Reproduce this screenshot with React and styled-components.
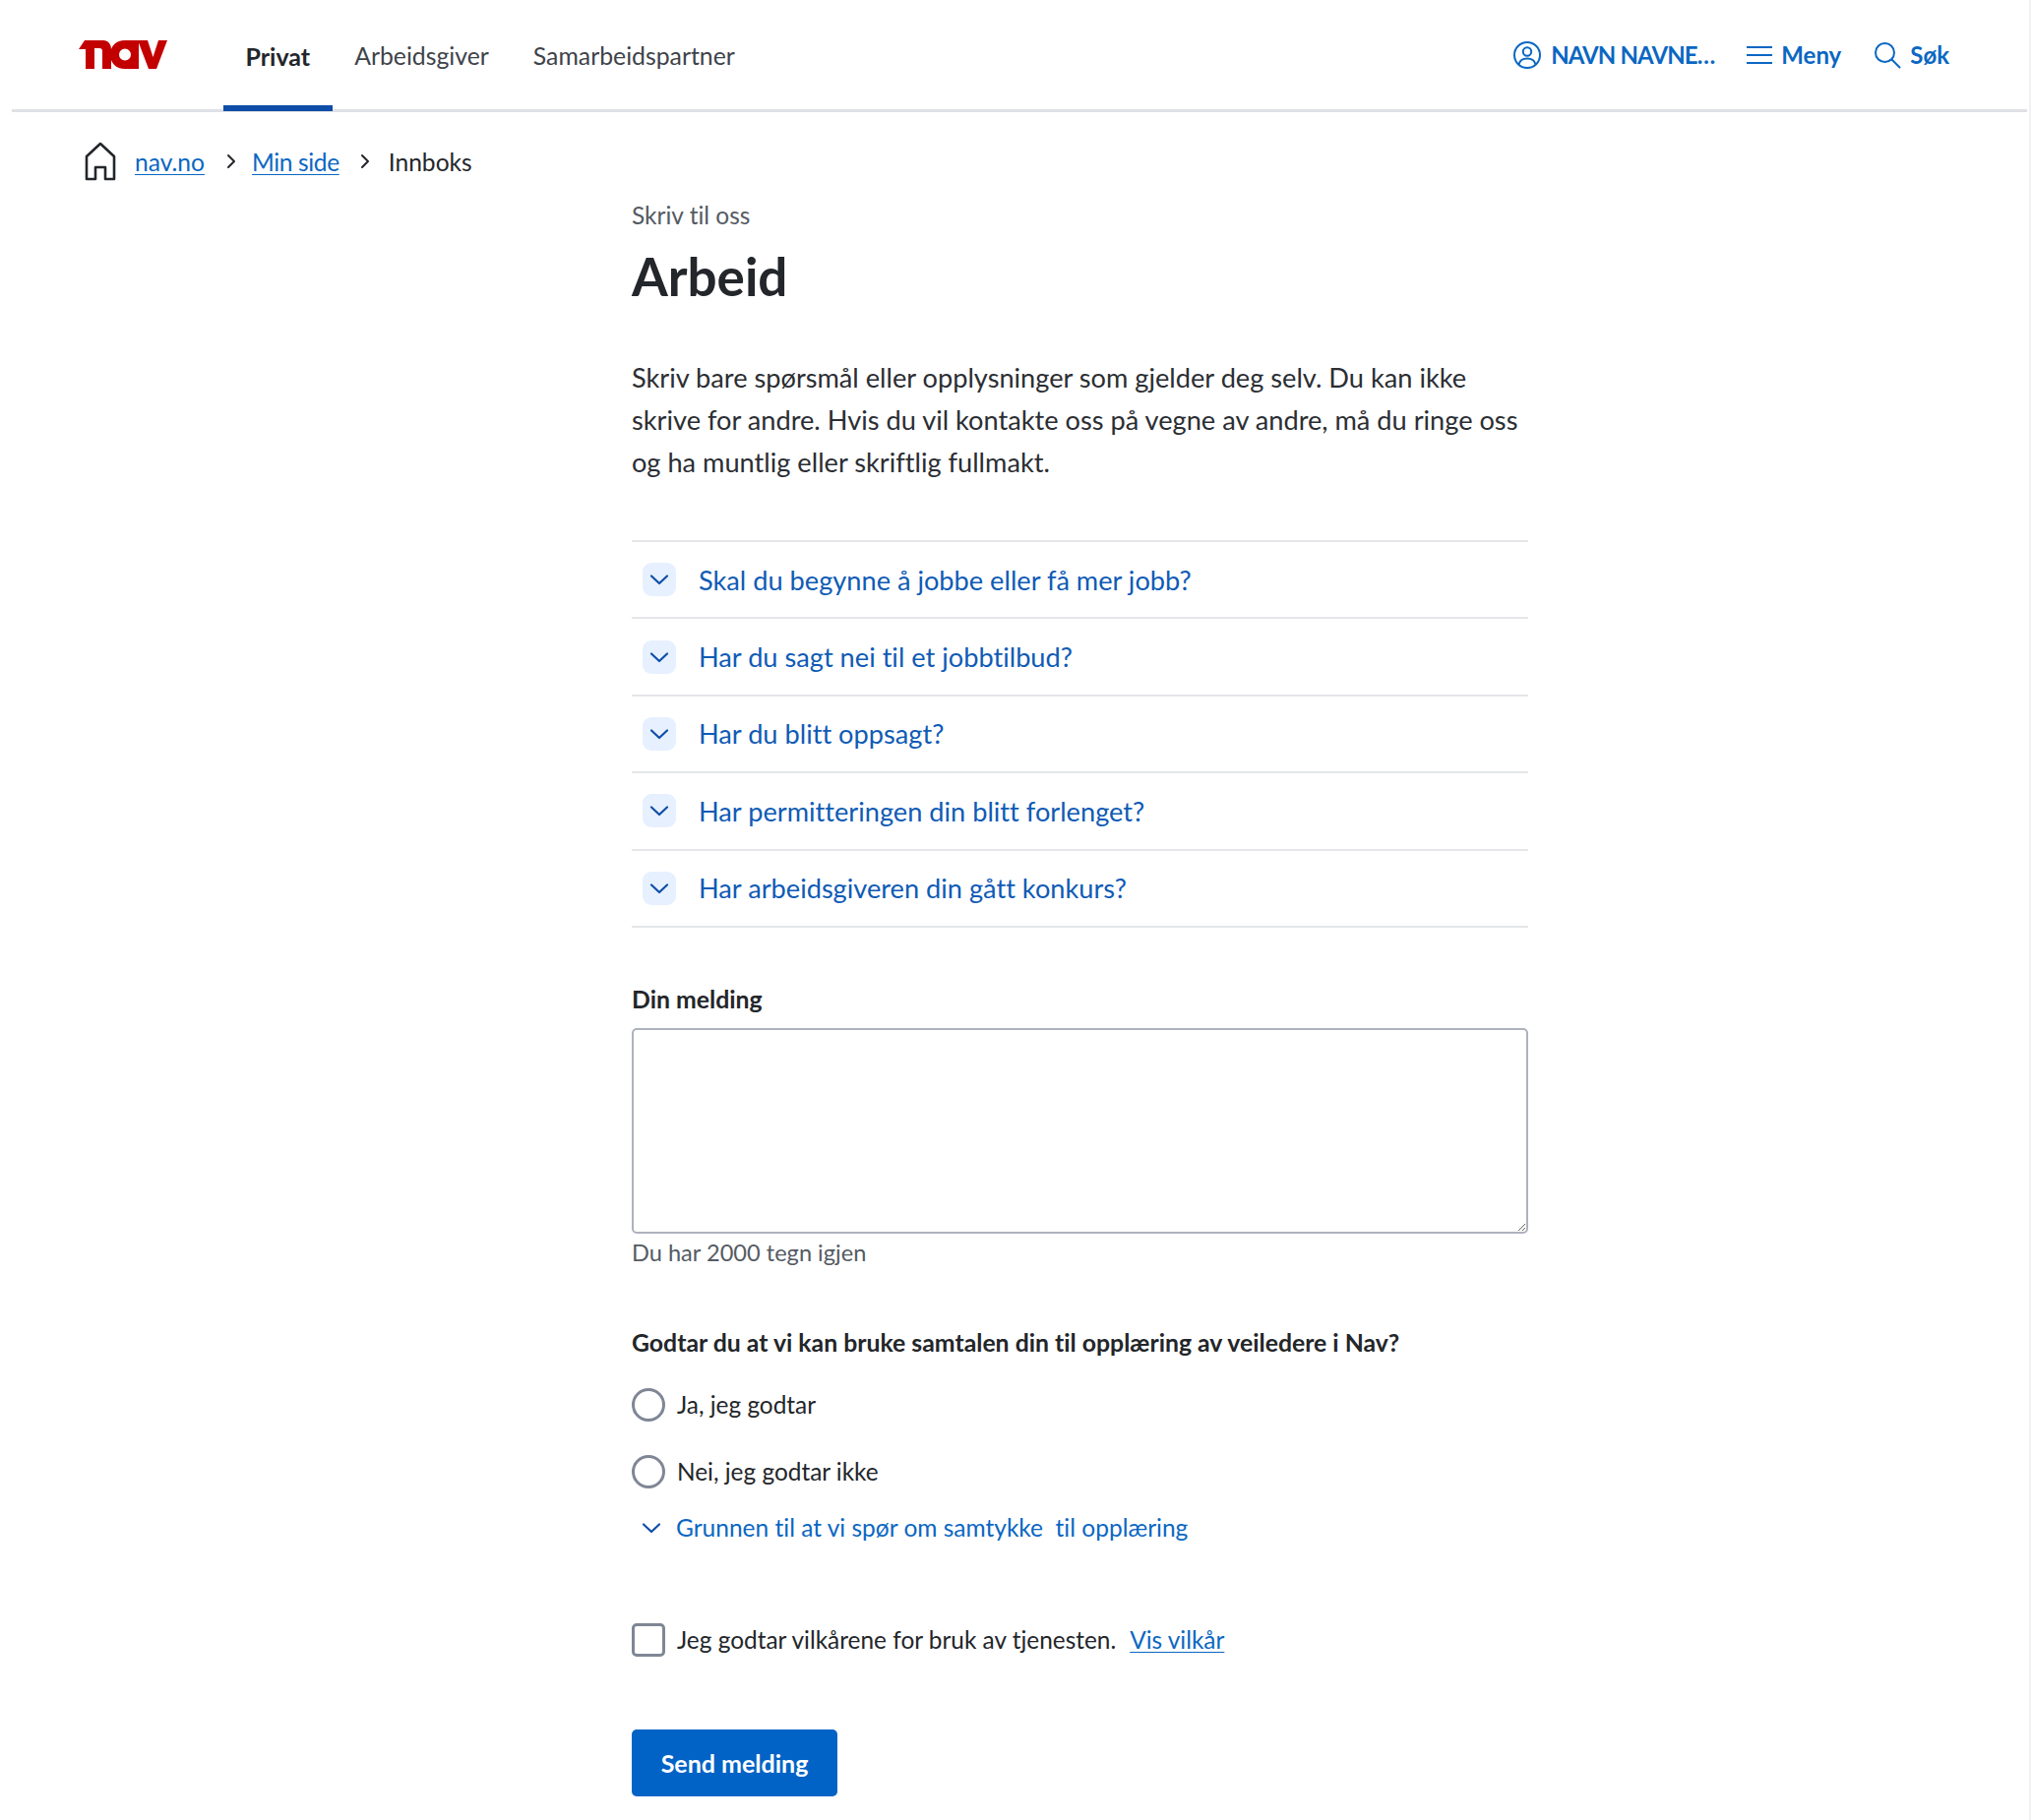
import styled, { createGlobalStyle } from 'styled-components';

const GlobalStyle = createGlobalStyle`
  * { box-sizing: border-box; }
  html, body { margin: 0; padding: 0; background: #fff; }
  body {
    font-family: "Lato", "Noto Sans", sans-serif;
    font-variant-ligatures: none;
    color: #23262a;
    -webkit-font-smoothing: antialiased;
  }
`;

const Page = styled.div`
  width: 2064px;
  min-height: 1850px;
  background: #fff;
  border-right: 2px solid #f1f2f3;
`;

const Header = styled.header`
  margin: 0 2px 0 12px;
  height: 114px;
  padding: 0 79px 0 68px;
  border-bottom: 3px solid #dfe1e5;
  display: flex;
  align-items: stretch;
  justify-content: space-between;
`;

const HeaderLeft = styled.div`
  display: flex;
  align-items: stretch;
`;

const Logo = styled.svg`
  width: 90px;
  height: 29px;
  align-self: center;
  margin-right: 57px;
`;

const Tab = styled.a`
  display: flex;
  align-items: center;
  padding: 6px 22.5px 0;
  font-size: ${p => (p.$active ? 25 : 24.8)}px;
  color: ${p => (p.$active ? '#23262a' : '#3e434a')};
  font-weight: ${p => (p.$active ? 700 : 400)};
  margin-bottom: -2px;
  border-bottom: 6px solid ${p => (p.$active ? '#0f4ea8' : 'transparent')};
`;

const HeaderRight = styled.div`
  display: flex;
  align-items: center;
  gap: 33px;
`;

const HeaderAction = styled.a`
  display: flex;
  align-items: center;
  gap: 9px;
  font-size: 24px;
  font-weight: 700;
  color: #0b67c2;
  letter-spacing: ${p => (p.$tight ? '-0.9px' : '0')};
`;

const Breadcrumbs = styled.nav`
  display: flex;
  align-items: center;
  height: 68px;
  margin-top: 16px;
  padding-left: 85px;
  font-size: 24.6px;
`;

const HomeIcon = styled.svg`
  width: 34px;
  height: 40px;
  margin-right: 18px;
`;

const CrumbLink = styled.a`
  color: #0b67c2;
  text-decoration: underline;
  text-underline-offset: 3px;
  text-decoration-thickness: 1px;
  letter-spacing: ${p => (p.$tight ? '-0.4px' : '0')};
`;

const CrumbSeparator = styled.svg`
  width: 14px;
  height: 16px;
  margin: 0 14.5px 0 19.5px;
`;

const CurrentCrumb = styled.span`
  margin-left: 2px;
`;

const Main = styled.main`
  width: 911px;
  margin: 4px 0 0 642px;
`;

const Eyebrow = styled.p`
  margin: 0;
  font-size: 24.5px;
  line-height: 34px;
  color: #555b63;
`;

const Title = styled.h1`
  margin: 10px 0 0;
  font-size: 53px;
  line-height: 70px;
  font-weight: 700;
  color: #23262a;
`;

const Intro = styled.p`
  margin: 46px 0 0;
  font-size: 27.2px;
  line-height: 43px;
  color: #2b2e33;
`;

const Accordion = styled.div`
  margin-top: 58px;
  border-top: 2px solid #e4e6e9;
`;

const AccordionRow = styled.div`
  height: 78.4px;
  display: flex;
  align-items: center;
  gap: 23px;
  padding-left: 11px;
  border-bottom: 2px solid #e4e6e9;
  color: #0f5bb5;
  font-size: 27.2px;
`;

const ChevronBox = styled.span`
  width: 34px;
  height: 34px;
  border-radius: 9px;
  background: #e6f0ff;
  display: flex;
  align-items: center;
  justify-content: center;
`;

const FieldLabel = styled.label`
  display: block;
  margin-top: 57px;
  font-size: 24.8px;
  line-height: 32px;
  font-weight: 700;
`;

const TextArea = styled.textarea`
  display: block;
  width: 100%;
  height: 209px;
  margin-top: 13px;
  border: 2px solid #adb2bd;
  border-radius: 5px;
  background: #fff;
  outline: none;
`;

const Helper = styled.p`
  margin: 3px 0 0;
  font-size: 23.6px;
  line-height: 32px;
  color: #555b63;
`;

const Question = styled.p`
  margin: 60px 0 0;
  font-size: 24.8px;
  line-height: 32px;
  font-weight: 700;
`;

const OptionRow = styled.label`
  display: flex;
  align-items: center;
  gap: 12px;
  height: 34px;
  margin-top: ${p => p.$top}px;
  font-size: 24.4px;
`;

const Radio = styled.span`
  width: 34px;
  height: 34px;
  border-radius: 50%;
  border: 3px solid #7f8796;
  background: #fff;
`;

const Checkbox = styled.span`
  width: 34px;
  height: 34px;
  border-radius: 5px;
  border: 3px solid #7f8796;
  background: #fff;
`;

const Disclosure = styled.a`
  display: flex;
  align-items: center;
  gap: 13px;
  margin-top: 23px;
  height: 34px;
  padding-left: 8px;
  font-size: 24.5px;
  color: #0b67c2;
`;

const TermsLink = styled(CrumbLink)`
  margin-left: 2px;
`;

const SendButton = styled.button`
  display: block;
  width: 209px;
  height: 68px;
  margin-top: 74px;
  border: 0;
  border-radius: 5px;
  background: #0263c6;
  color: #fff;
  font-family: inherit;
  font-size: 25px;
  font-weight: 700;
`;

const ChevronDown = () => (
  <svg width="24" height="24" viewBox="0 0 24 24" fill="none" stroke="#0f4ea8" strokeWidth="2.2" strokeLinecap="round" strokeLinejoin="round">
    <path d="M4 8.500 12 16 20 8.500" />
  </svg>
);

const CrumbChevron = () => (
  <CrumbSeparator viewBox="0 0 14 16" fill="none" stroke="#23262a" strokeWidth="2" strokeLinecap="round" strokeLinejoin="round">
    <path d="M4 2 10 8 4 14" />
  </CrumbSeparator>
);

const questions = [
  'Skal du begynne å jobbe eller få mer jobb?',
  'Har du sagt nei til et jobbtilbud?',
  'Har du blitt oppsagt?',
  'Har permitteringen din blitt forlenget?',
  'Har arbeidsgiveren din gått konkurs?',
];

const App = () => (
  <Page>
    <GlobalStyle />
    <Header>
      <HeaderLeft>
        <Logo viewBox="0 0 90 29" aria-label="nav">
          <g fill="#c30000">
            <path d="M0 9 6 0H25C30 0 33 4 33 9V29H24V11C24 9 23 8 21 8H16V29H7V9Z" />
            <path fillRule="evenodd" d="M47 0H61V29H47C38 29 32 23 32 14.500C32 6 38 0 47 0ZM47 8.500A6 6 0 1 0 47 20.500 6 6 0 1 0 47 8.500Z" />
            <path d="M60 0H70L75.500 17 81 0H90L79 29H71Z" />
          </g>
        </Logo>
        <Tab $active>Privat</Tab>
        <Tab>Arbeidsgiver</Tab>
        <Tab>Samarbeidspartner</Tab>
      </HeaderLeft>
      <HeaderRight>
        <HeaderAction $tight>
          <svg width="30" height="30" viewBox="0 0 30 30" fill="none" stroke="#0b67c2" strokeWidth="2">
            <circle cx="15" cy="15" r="13" />
            <circle cx="15" cy="11.500" r="4.200" />
            <path d="M6.500 24.500C7.500 20 10.500 18.500 15 18.500S22.500 20 23.500 24.500" />
          </svg>
          NAVN NAVNE…
        </HeaderAction>
        <HeaderAction>
          <svg width="26" height="24" viewBox="0 0 26 24" fill="none" stroke="#0b67c2" strokeWidth="2">
            <path d="M0 4H26M0 12H26M0 20H26" />
          </svg>
          Meny
        </HeaderAction>
        <HeaderAction>
          <svg width="28" height="28" viewBox="0 0 28 28" fill="none" stroke="#0b67c2" strokeWidth="2" strokeLinecap="round">
            <circle cx="11.500" cy="11.500" r="9.500" />
            <path d="M18.500 18.500 26.500 26.500" />
          </svg>
          Søk
        </HeaderAction>
      </HeaderRight>
    </Header>
    <Breadcrumbs>
      <HomeIcon viewBox="0 0 34 40" fill="none" stroke="#23262a" strokeWidth="2.600" strokeLinejoin="round">
        <path d="M3 15 17 2 31 15V38H22V26H12V38H3Z" />
      </HomeIcon>
      <CrumbLink>nav.no</CrumbLink>
      <CrumbChevron />
      <CrumbLink $tight>Min side</CrumbLink>
      <CrumbChevron />
      <CurrentCrumb>Innboks</CurrentCrumb>
    </Breadcrumbs>
    <Main>
      <Eyebrow>Skriv til oss</Eyebrow>
      <Title>Arbeid</Title>
      <Intro>
        Skriv bare spørsmål eller opplysninger som gjelder deg selv. Du kan ikke skrive for andre. Hvis du vil kontakte oss på vegne av andre, må du ringe oss og ha muntlig eller skriftlig fullmakt.
      </Intro>
      <Accordion>
        {questions.map(q => (
          <AccordionRow key={q}>
            <ChevronBox><ChevronDown /></ChevronBox>
            {q}
          </AccordionRow>
        ))}
      </Accordion>
      <FieldLabel>Din melding</FieldLabel>
      <TextArea />
      <Helper>Du har 2000 tegn igjen</Helper>
      <Question>Godtar du at vi kan bruke samtalen din til opplæring av veiledere i Nav?</Question>
      <OptionRow $top={30}><Radio />Ja, jeg godtar</OptionRow>
      <OptionRow $top={34}><Radio />Nei, jeg godtar ikke</OptionRow>
      <Disclosure><ChevronDown />Grunnen til at vi spør om samtykke&nbsp; til opplæring</Disclosure>
      <OptionRow $top={80}>
        <Checkbox />
        Jeg godtar vilkårene for bruk av tjenesten.
        <TermsLink>Vis vilkår</TermsLink>
      </OptionRow>
      <SendButton>Send melding</SendButton>
    </Main>
  </Page>
);

export default App;
